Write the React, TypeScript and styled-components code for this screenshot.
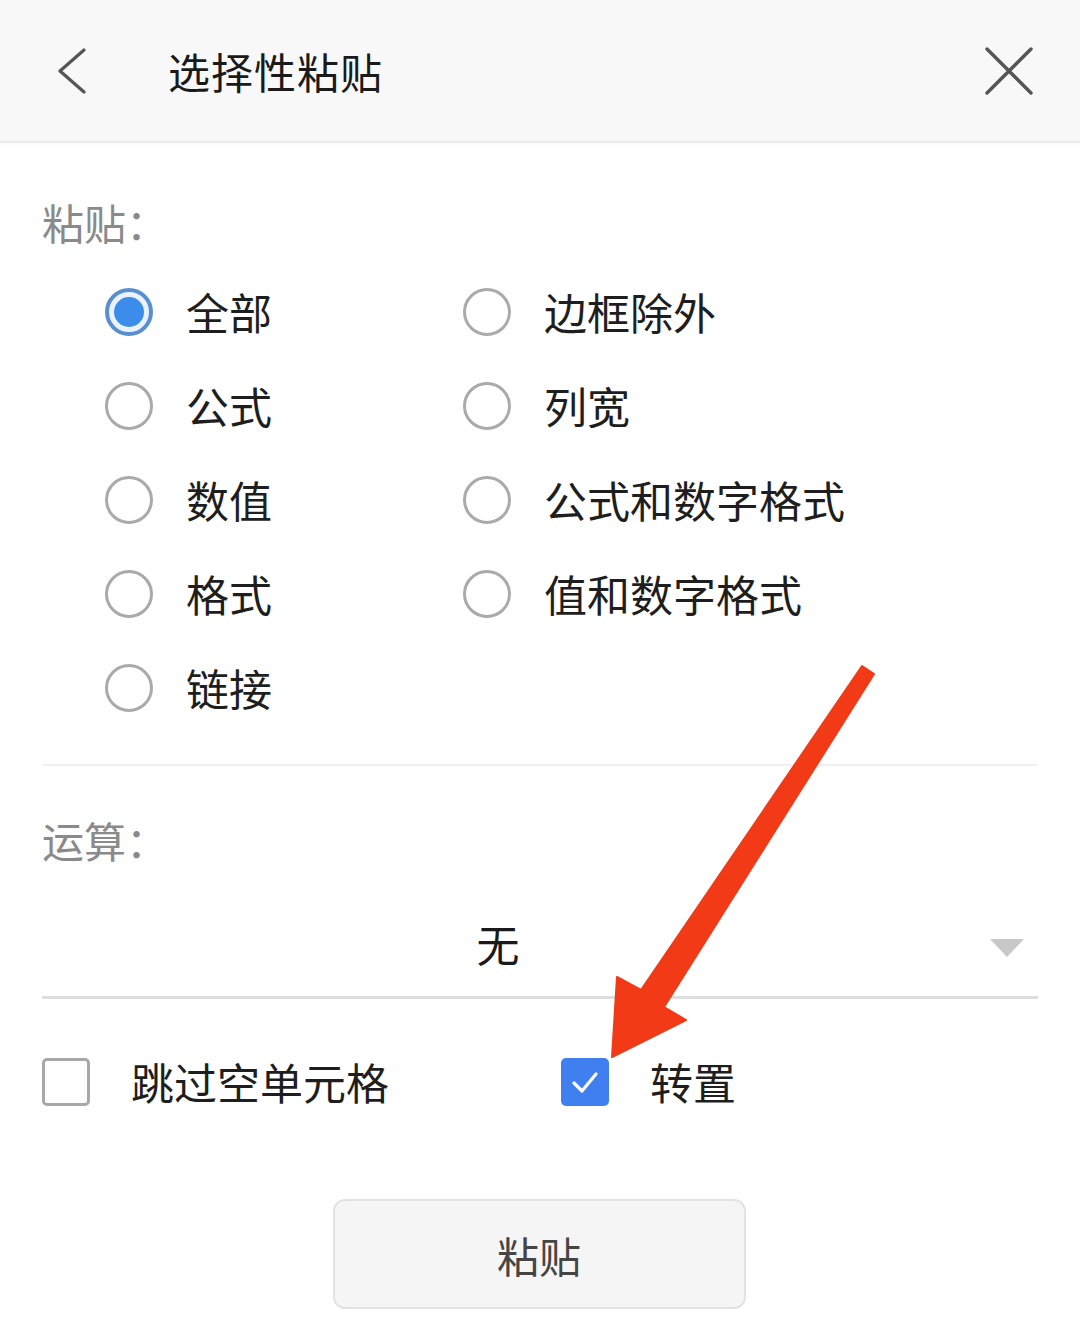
import React from "react";
import styled, { createGlobalStyle } from "styled-components";

const Global = createGlobalStyle`
  html, body { margin: 0; padding: 0; background: #ffffff; }
  body { font-family: "Noto Sans CJK SC", "Noto Sans", sans-serif; }
`;

const Page = styled.div`
  position: relative;
  width: 1080px;
  height: 1338px;
  background: #ffffff;
  overflow: hidden;
`;

const Header = styled.header`
  height: 141px;
  background: #f8f8f8;
  border-bottom: 2px solid #ececec;
  box-shadow: 0 1px 2px rgba(0, 0, 0, 0.04);
  display: flex;
  align-items: center;
  padding: 0 46px 0 56px;
  box-sizing: content-box;
`;

const IconButton = styled.div`
  display: flex;
  align-items: center;
  justify-content: center;
`;

const Title = styled.h1`
  margin: 0 0 0 80px;
  flex: 1;
  font-size: 42px;
  font-weight: 400;
  color: #1a1a1a;
  line-height: 1;
  letter-spacing: 1px;
`;

const Content = styled.main`
  padding: 0 42px;
`;

const SectionLabel = styled.div<{ $top: number }>`
  padding-top: ${(p) => p.$top}px;
  font-size: 42px;
  line-height: 44px;
  color: #8a8a8a;
`;

const RadioGrid = styled.div`
  margin-top: 21px;
  padding-left: 63px;
  display: grid;
  grid-template-columns: 358px 1fr;
  grid-auto-rows: 94px;
`;

const Option = styled.div`
  display: flex;
  align-items: center;
  gap: 33px;
`;

const Radio = styled.span<{ $checked?: boolean }>`
  width: 48px;
  height: 48px;
  box-sizing: border-box;
  border-radius: 50%;
  border: ${(p) => (p.$checked ? "4px solid #5a8fcf" : "3px solid #aaaaaa")};
  background: ${(p) => (p.$checked ? "#eaf3fd" : "#ffffff")};
  display: flex;
  align-items: center;
  justify-content: center;
  flex-shrink: 0;
  &::after {
    content: "";
    display: ${(p) => (p.$checked ? "block" : "none")};
    width: 30px;
    height: 30px;
    border-radius: 50%;
    background: #3c8cec;
  }
`;

const OptionText = styled.span`
  font-size: 43px;
  line-height: 44px;
  color: #1e1e1e;
  margin-top: -3px;
`;

const Divider = styled.div`
  margin-top: 29px;
  height: 2px;
  background: #f0f0f0;
`;

const Select = styled.div`
  height: 137px;
  box-sizing: border-box;
  padding-top: 59px;
  border-bottom: 3px solid #dedede;
  display: flex;
  align-items: flex-start;
`;

const SelectValue = styled.div`
  flex: 1;
  text-align: center;
  font-size: 43px;
  line-height: 44px;
  color: #1a1a1a;
  padding-right: 36px;
`;

const Caret = styled.span`
  margin-top: 18px;
  margin-right: 14px;
  width: 0;
  height: 0;
  border-left: 17px solid transparent;
  border-right: 17px solid transparent;
  border-top: 18px solid #c8c8c8;
`;

const CheckRow = styled.div`
  margin-top: 36px;
  height: 94px;
  display: grid;
  grid-template-columns: 519px 1fr;
  align-items: center;
`;

const CheckItem = styled.div`
  display: flex;
  align-items: center;
  gap: 41px;
`;

const CheckBox = styled.span<{ $checked?: boolean }>`
  width: 48px;
  height: 48px;
  box-sizing: border-box;
  border-radius: 5px;
  border: ${(p) => (p.$checked ? "none" : "3px solid #a8a8a8")};
  background: ${(p) => (p.$checked ? "#3f7ff0" : "#ffffff")};
  display: flex;
  align-items: center;
  justify-content: center;
  flex-shrink: 0;
`;

const ButtonWrap = styled.div`
  margin-top: 70px;
  display: flex;
  justify-content: center;
`;

const PasteButton = styled.button`
  width: 413px;
  height: 110px;
  margin-left: -2px;
  background: #f5f5f5;
  border: 2px solid #e2e2e2;
  border-radius: 12px;
  font-family: "Noto Sans CJK SC", "Noto Sans", sans-serif;
  font-size: 42px;
  color: #454545;
  cursor: pointer;
`;

const ArrowLayer = styled.svg`
  position: absolute;
  left: 0;
  top: 0;
  pointer-events: none;
`;

const left = ["全部", "公式", "数值", "格式", "链接"];
const right = ["边框除外", "列宽", "公式和数字格式", "值和数字格式"];

export default function App() {
  const cells: React.ReactNode[] = [];
  for (let i = 0; i < left.length; i++) {
    cells.push(
      <Option key={"l" + i}>
        <Radio $checked={i === 0} />
        <OptionText>{left[i]}</OptionText>
      </Option>
    );
    if (right[i]) {
      cells.push(
        <Option key={"r" + i}>
          <Radio />
          <OptionText>{right[i]}</OptionText>
        </Option>
      );
    }
  }

  return (
    <Page>
      <Global />
      <Header>
        <IconButton>
          <svg width="32" height="46" viewBox="0 0 32 46">
            <path d="M28 2 L4 23 L28 44" fill="none" stroke="#555" strokeWidth="3.2" strokeLinecap="round" strokeLinejoin="round" />
          </svg>
        </IconButton>
        <Title>选择性粘贴</Title>
        <IconButton>
          <svg width="50" height="50" viewBox="0 0 50 50">
            <path d="M3 3 L47 47 M47 3 L3 47" fill="none" stroke="#555" strokeWidth="3.4" strokeLinecap="round" />
          </svg>
        </IconButton>
      </Header>
      <Content>
        <SectionLabel $top={57}>粘贴：</SectionLabel>
        <RadioGrid>{cells}</RadioGrid>
        <Divider />
        <SectionLabel $top={52}>运算：</SectionLabel>
        <Select>
          <SelectValue>无</SelectValue>
          <Caret />
        </Select>
        <CheckRow>
          <CheckItem>
            <CheckBox />
            <OptionText>跳过空单元格</OptionText>
          </CheckItem>
          <CheckItem>
            <CheckBox $checked>
              <svg width="32" height="32" viewBox="0 0 32 32">
                <path d="M5 17 L13 25 L27 8" fill="none" stroke="#ffffff" strokeWidth="3.2" strokeLinecap="round" strokeLinejoin="round" />
              </svg>
            </CheckBox>
            <OptionText>转置</OptionText>
          </CheckItem>
        </CheckRow>
        <ButtonWrap>
          <PasteButton>粘贴</PasteButton>
        </ButtonWrap>
      </Content>
      <ArrowLayer width="1080" height="1338" viewBox="0 0 1080 1338">
        <polygon
          points="862,666 641,990 617,977 612,1057 686,1020 664,1007 874,674"
          fill="#f23a17"
          strokeLinejoin="round"
          stroke="#f23a17"
          strokeWidth="2"
        />
      </ArrowLayer>
    </Page>
  );
}
